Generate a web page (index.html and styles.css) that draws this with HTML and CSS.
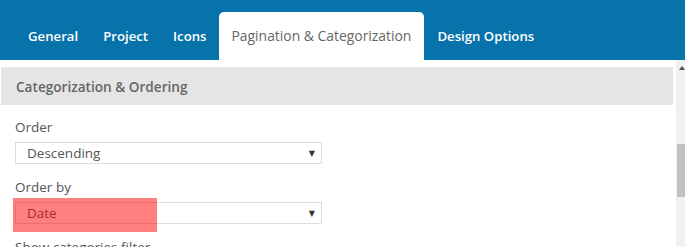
FILE: index.html
```html
<!DOCTYPE html>
<html>
<head>
<meta charset="utf-8">
<link rel="stylesheet" href="styles.css">
</head>
<body>
<div class="header">
  <div class="tabs">
    <div class="tab">General</div>
    <div class="tab">Project</div>
    <div class="tab">Icons</div>
    <div class="tab active">Pagination &amp; Categorization</div>
    <div class="tab">Design Options</div>
  </div>
</div>
<div class="body">
  <div class="main">
    <div class="section-title">Categorization &amp; Ordering</div>
    <div class="fields">
      <div class="field">
        <div class="label">Order</div>
        <div class="select"><span>Descending</span><span class="arrow">&#9660;</span></div>
      </div>
      <div class="field">
        <div class="label">Order by</div>
        <div class="select-wrap">
          <div class="select"><span>Date</span><span class="arrow">&#9660;</span></div>
          <div class="highlight"></div>
        </div>
      </div>
      <div class="field">
        <div class="label">Show categories filter</div>
      </div>
    </div>
  </div>
  <div class="scrollbar">
    <div class="up"></div>
    <div class="thumb"></div>
  </div>
</div>
</body>
</html>
```

FILE: styles.css
```css
html, body {
  margin: 0;
  padding: 0;
  background: #fff;
  font-family: "Open Sans", "Liberation Sans", sans-serif;
  overflow: hidden;
  height: 247px;
}
.header {
  height: 60px;
  background: #0873aa;
  display: flex;
  align-items: flex-end;
}
.tabs {
  display: flex;
  padding-left: 16px;
  height: 48px;
  gap: 1px;
}
.tab {
  padding: 0 12px 1px 12px;
  color: #fff;
  font-size: 13.2px;
  font-weight: 600;
  display: flex;
  align-items: center;
}
.tab.active {
  background: #fff;
  color: #666;
  font-weight: 400;
  font-size: 13.9px;
  border-radius: 5px 5px 0 0;
  padding: 0 13px 1px 12px;
}
.body {
  display: flex;
  height: 187px;
  overflow: hidden;
}
.main {
  flex: 1;
  padding: 7px 3px 0 1px;
}
.section-title {
  height: 38px;
  background: #e5e5e5;
  border-top: 1px solid #eaeaea;
  box-sizing: border-box;
  color: #666;
  font-size: 13.6px;
  font-weight: 600;
  display: flex;
  align-items: center;
  padding-left: 15px;
  padding-bottom: 1px;
}
.fields {
  padding: 13px 0 0 14px;
}
.field {
  display: flex;
  flex-direction: column;
  margin-bottom: 14px;
}
.label {
  color: #555;
  font-size: 13.5px;
  line-height: 18px;
  height: 18px;
  margin-bottom: 6px;
}
.select-wrap {
  position: relative;
  width: 307px;
}
.select {
  width: 307px;
  height: 22px;
  box-sizing: border-box;
  border: 1px solid #ddd;
  display: flex;
  align-items: center;
  justify-content: space-between;
  padding: 0 6px 0 11px;
  color: #555;
  font-size: 13.5px;
}
.arrow {
  font-size: 8px;
  color: #333;
  font-family: "DejaVu Sans", sans-serif;
}
.highlight {
  position: absolute;
  left: -2px;
  top: -4px;
  width: 144px;
  height: 34px;
  background: rgba(255, 0, 0, 0.5);
}
.scrollbar {
  width: 9px;
  background: #f1f1f1;
}
.up {
  width: 0;
  height: 0;
  border-left: 3px solid transparent;
  border-right: 3px solid transparent;
  border-bottom: 4px solid #505050;
  margin: 6px 0 0 3px;
}
.thumb {
  margin-top: 74px;
  margin-left: 1px;
  width: 8px;
  height: 53px;
  background: #c1c1c1;
}
```
